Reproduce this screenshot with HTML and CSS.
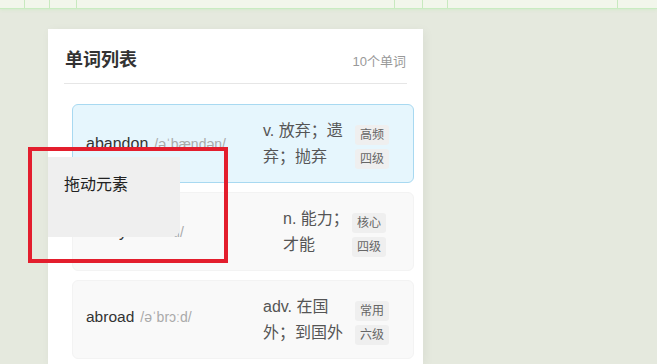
FILE: index.html
```html
<!DOCTYPE html>
<html lang="zh-CN">
<head>
<meta charset="utf-8">
<title>单词列表</title>
<link rel="stylesheet" href="styles.css">
</head>
<body>
<div class="ruler">
  <span class="seg"></span><span class="seg"></span><span class="seg"></span><span class="seg"></span><span class="seg"></span><span class="seg"></span><span class="seg"></span><span class="seg"></span>
</div>
<main class="card">
  <header class="card-header">
    <h2 class="title">单词列表</h2>
    <span class="count">10个单词</span>
  </header>
  <ul class="list">
    <li class="item item--active">
      <div class="word-info"><span class="word">abandon</span><span class="phonetic">/əˈbændən/</span></div>
      <div class="meaning">v. 放弃；遗弃；抛弃</div>
      <div class="tags"><span class="tag">高频</span><span class="tag">四级</span></div>
    </li>
    <li class="item item--alt">
      <div class="word-info"><span class="word">ability</span><span class="phonetic">/əˈbɪləti/</span></div>
      <div class="meaning meaning--narrow">n. 能力；才能</div>
      <div class="tags"><span class="tag">核心</span><span class="tag">四级</span></div>
    </li>
    <li class="item">
      <div class="word-info word-info--raised"><span class="word word--sm">abroad</span><span class="phonetic">/əˈbrɔːd/</span></div>
      <div class="meaning">adv. 在国外；到国外</div>
      <div class="tags"><span class="tag">常用</span><span class="tag">六级</span></div>
    </li>
  </ul>
</main>
<div class="drag-ghost">拖动元素</div>
<div class="highlight-box"></div>
</body>
</html>
```

FILE: styles.css
```css
html, body {
  margin: 0;
  padding: 0;
}
body {
  width: 657px;
  height: 364px;
  overflow: hidden;
  background: #e5e9de;
  font-family: "Liberation Sans", "Noto Sans CJK SC", sans-serif;
  position: relative;
}
.ruler {
  display: grid;
  grid-template-columns: 24px 25px 27px 318px 28px 25px 170px 1fr;
  height: 8px;
  background: #f2f6eb;
  border-bottom: 1px solid #c9ecc1;
  box-shadow: 0 1px 3px rgba(200, 236, 190, 0.5);
}
.seg + .seg {
  border-left: 1px solid #c8e9bf;
}
.card {
  margin: 20px 0 0 48px;
  width: 375px;
  height: 335px;
  box-sizing: border-box;
  background: #ffffff;
  padding: 19px 16px 0;
  box-shadow: 2px 2px 10px rgba(0, 0, 0, 0.05);
  overflow: hidden;
}
.card-header {
  display: flex;
  justify-content: space-between;
  align-items: center;
  padding-bottom: 11px;
  border-bottom: 1px solid #e6e6e6;
}
.title {
  margin: 0;
  font-size: 18px;
  line-height: 24px;
  font-weight: bold;
  color: #333;
  padding-left: 1px;
}
.count {
  font-size: 13px;
  color: #999;
  padding-right: 1px;
}
.list {
  list-style: none;
  margin: 0 -7px 0 8px;
  padding: 20px 0 0;
}
.item {
  display: flex;
  align-items: center;
  height: 79px;
  box-sizing: border-box;
  padding: 0 24px 0 13px;
  margin-bottom: 9px;
  background: #f9f9f9;
  border: 1px solid #f3f3f3;
  border-radius: 6px;
}
.item--active {
  background: #e6f6fd;
  border-color: #a8d9f1;
}
.item--alt {
  padding-right: 27px;
}
.word-info {
  flex: 1;
  display: flex;
  align-items: baseline;
  white-space: nowrap;
}
.word-info--raised {
  margin-bottom: 5px;
}
.word {
  font-size: 16px;
  color: #333;
}
.word--sm {
  font-size: 15.5px;
}
.phonetic {
  font-size: 14px;
  color: #aaa;
  margin-left: 6px;
}
.meaning {
  width: 82px;
  margin-right: 10px;
  font-size: 16px;
  line-height: 26px;
  color: #555;
}
.meaning--narrow {
  width: 69px;
  margin-right: 0;
}
.tags {
  display: flex;
  flex-direction: column;
  gap: 4px;
  margin-top: 6px;
}
.tag {
  font-size: 12px;
  line-height: 16px;
  padding: 2px 5px;
  background: #efefef;
  color: #666;
  border-radius: 3px;
}
.drag-ghost {
  position: absolute;
  left: 48px;
  top: 157px;
  width: 132px;
  height: 80px;
  box-sizing: border-box;
  padding: 17px 16px 0;
  background: #efefef;
  border-radius: 0 0 8px 0;
  font-size: 16px;
  line-height: 22px;
  color: #222;
}
.highlight-box {
  position: absolute;
  left: 28px;
  top: 147px;
  width: 200px;
  height: 116px;
  box-sizing: border-box;
  border: 4px solid #e31e2d;
}
```
